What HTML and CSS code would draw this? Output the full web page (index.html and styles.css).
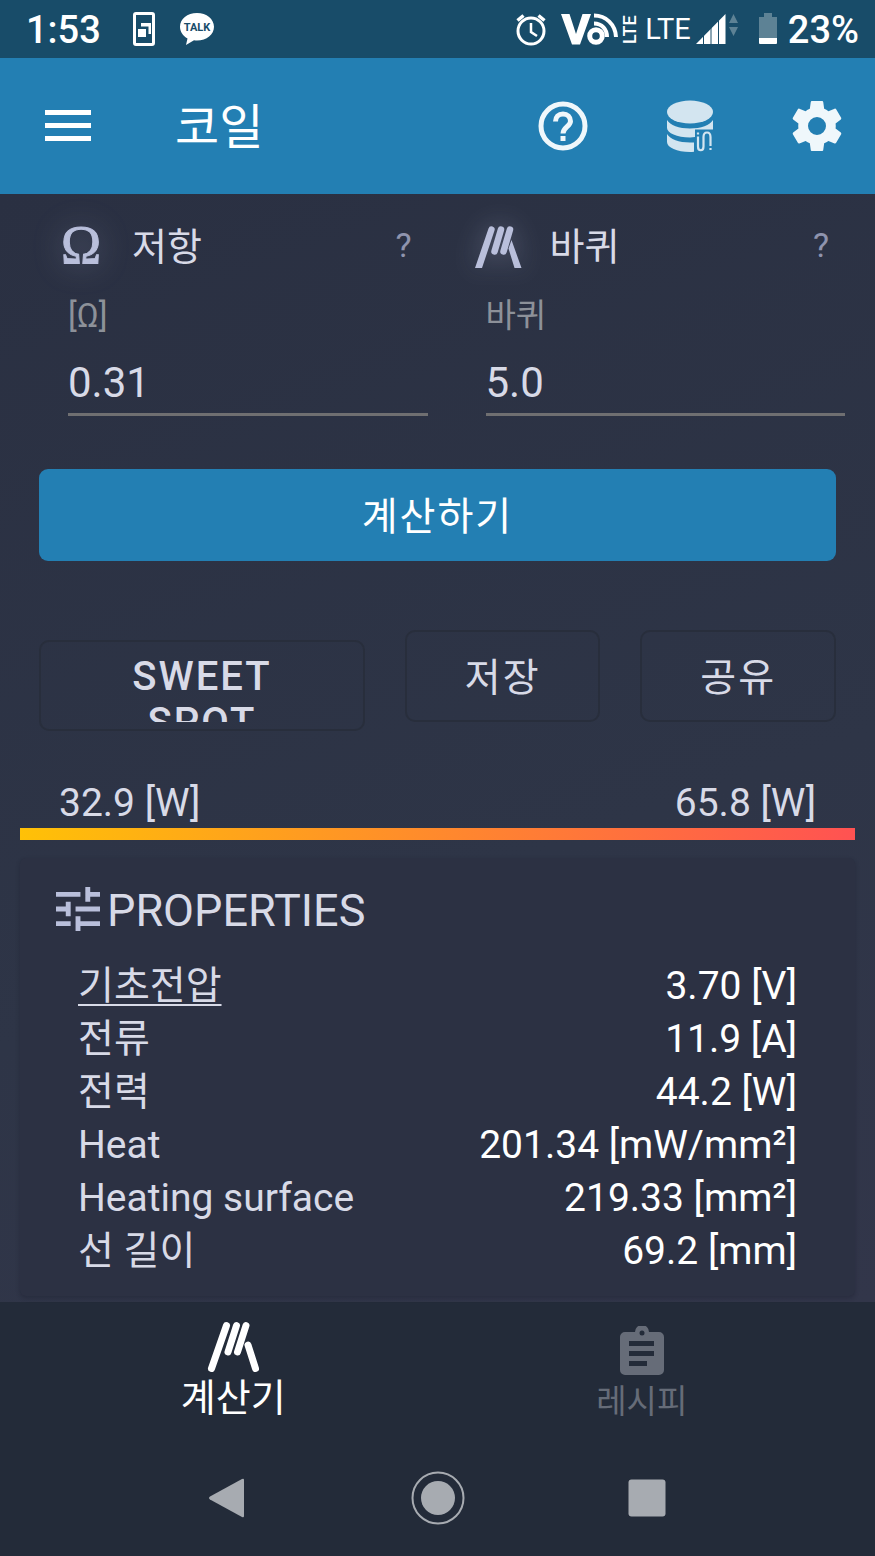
FILE: index.html
```html
<!DOCTYPE html>
<html lang="ko">
<head>
    <title>코일</title>
    <meta charset="utf-8">
    <meta name="viewport" content="width=device-width, initial-scale=1">
    <link rel="stylesheet" href="styles.css">
</head>
<body>
<div class="status">
    <span class="time">1:53</span>
    <svg class="st-phone" width="22" height="34" viewBox="0 0 22 34">
        <rect x="1.500" y="1.500" width="19" height="31" rx="1.500" fill="none" stroke="#fff" stroke-width="3"/>
        <path d="M5 17h8v8H5zM8 11h10v11h-2.500v-7.500H8z" fill="#fff"/>
    </svg>
    <svg class="st-talk" width="36" height="34" viewBox="0 0 36 34">
        <path d="M18 1C8.300 1 1 7 1 14.800c0 5 3 9.200 7.500 11.700L7 33l8-4.700c1 .2 2 .2 3 .2 9.700 0 17-6 17-13.700S27.700 1 18 1z" fill="#fff"/>
        <text x="18" y="19" text-anchor="middle" class="talk-text">TALK</text>
    </svg>
    <div class="status-right">
        <svg width="32" height="34" viewBox="0 0 32 34" fill="none" stroke="#fff">
            <circle cx="16" cy="19" r="13" stroke-width="3"/>
            <path d="M16 11v9l6 4" stroke-width="2.500"/>
            <path d="M2.500 8.500l6-5M29.500 8.500l-6-5" stroke-width="3.500"/>
        </svg>
        <svg class="st-volte" width="76" height="34" viewBox="0 0 76 34">
            <path d="M0 2h8.500l6.500 20 6.500-20H30L19 32.500h-8z" fill="#fff"/>
            <circle cx="35" cy="24" r="6.300" fill="none" stroke="#fff" stroke-width="5"/>
            <path d="M33 11.500c8 0 13 6 13 13.500M33 3.500c12 0 21.500 9 22 21.500" fill="none" stroke="#fff" stroke-width="4"/>
            <text transform="translate(75 32) rotate(-90)" class="volte-text">LTE</text>
        </svg>
        <span class="lte">LTE</span>
        <svg class="st-signal" width="44" height="34" viewBox="0 0 44 34">
            <path d="M1 32L30.500 2v30z" fill="#fff"/>
            <path d="M8.500 20v12M16 14v18M23.500 8v24" stroke="#184c69" stroke-width="1"/>
            <path d="M34 11l4.500-9 4.500 9zM34 15h9l-4.500 9z" fill="#5d8295"/>
        </svg>
        <svg class="st-battery" width="18" height="34" viewBox="0 0 18 34">
            <path d="M0 5h5V1h8v4h5v21H0z" fill="#5d8295"/>
            <path d="M0 26h18v5a1 1 0 0 1-1 1H1a1 1 0 0 1-1-1z" fill="#fff"/>
        </svg>
        <span class="percent">23%</span>
    </div>
</div>

<header class="appbar">
    <button class="icon-btn menu" aria-label="메뉴">
        <svg width="46" height="32" viewBox="0 0 46 32"><path d="M0 0h46v5H0zM0 13h46v5H0zM0 26h46v5H0z" fill="#fff"/></svg>
    </button>
    <h1>코일</h1>
    <button class="icon-btn" aria-label="도움말">
        <svg width="60" height="60" viewBox="0 0 60 60">
            <circle cx="30" cy="30" r="22" fill="none" stroke="#eff7fb" stroke-width="5"/>
            <path d="M22.500 25.500c0-4.500 3-7.600 7.500-7.600s7.500 3 7.500 7.300c0 5-7.500 6-7.500 12.300" fill="none" stroke="#eff7fb" stroke-width="5"/>
            <path d="M27.500 40h5v5h-5z" fill="#eff7fb"/>
        </svg>
    </button>
    <button class="icon-btn" aria-label="데이터베이스">
        <svg width="60" height="60" viewBox="0 0 60 60" fill="#d3e5f0">
            <ellipse cx="30" cy="16" rx="23" ry="11.500"/>
            <path d="M7 24c3 5 12 8.500 23 8.500S50 29 53 24v9.500H35V41c-1.500.3-3 .4-5 .4-13 0-23-4.400-23-9.400z"/>
            <path d="M7 38c3 5 12 8.500 23 8.500h4v9.300c-1.500.2-2.500.2-4 .2-13 0-23-4.400-23-10z"/>
            <path d="M38 40.500V50.500c0 5 5.500 5 5.500 0V41c0-6 7-6 7 0V50" fill="none" stroke="#d3e5f0" stroke-width="2.200"/>
            <path d="M36.900 36.500h2.200v2h-2.200zM49.400 52h2.200v2h-2.200z"/>
        </svg>
    </button>
    <button class="icon-btn" aria-label="설정">
        <svg width="60" height="60" viewBox="0 0 24 24">
            <path d="M19.430 12.980c.04-.32.07-.64.07-.98s-.03-.66-.07-.98l2.110-1.650c.19-.15.24-.42.12-.64l-2-3.460c-.12-.22-.39-.3-.61-.22l-2.490 1c-.52-.4-1.080-.73-1.690-.98l-.38-2.650C14.460 2.180 14.250 2 14 2h-4c-.25 0-.46.18-.49.42l-.38 2.650c-.61.25-1.170.59-1.690.98l-2.490-1c-.23-.09-.49 0-.61.22l-2 3.460c-.13.22-.07.49.12.64l2.110 1.650c-.04.32-.07.65-.07.98s.03.66.07.98l-2.110 1.650c-.19.15-.24.42-.12.64l2 3.460c.12.22.39.3.61.22l2.490-1c.52.4 1.080.73 1.690.98l.38 2.650c.03.24.24.42.49.42h4c.25 0 .46-.18.49-.42l.38-2.650c.61-.25 1.170-.59 1.690-.98l2.490 1c.23.09.49 0 .61-.22l2-3.460c.12-.22.07-.49-.12-.64l-2.110-1.650zM12 15.600a3.600 3.600 0 1 1 0-7.200 3.600 3.600 0 0 1 0 7.200z" fill="#eff7fb"/>
        </svg>
    </button>
</header>

<main>
    <div class="fields">
        <section class="field">
            <div class="field-head">
                <span class="field-icon omega">Ω</span>
                <h2>저항</h2>
                <button class="hint">?</button>
            </div>
            <label for="ohm">[Ω]</label>
            <input id="ohm" type="text" value="0.31">
        </section>
        <section class="field">
            <div class="field-head">
                <span class="field-icon">
                    <svg class="glow" width="50" height="50" viewBox="0 0 50 50">
                        <path d="M1 48L14.500 8.500a3 3 0 0 1 6 2L8 48zM40.500 48l-6-19.500 3-8.500L47.500 48z" fill="#b9bfdb"/>
                        <path d="M20.500 31.500l6.500-22M29.500 31.500l6.500-22" fill="none" stroke="#b9bfdb" stroke-width="6.500" stroke-linecap="round"/>
                    </svg>
                </span>
                <h2>바퀴</h2>
                <button class="hint">?</button>
            </div>
            <label for="wraps">바퀴</label>
            <input id="wraps" type="text" value="5.0">
        </section>
    </div>

    <button class="calc">계산하기</button>

    <div class="actions">
        <button class="btn sweet"><span>SWEET SPOT</span></button>
        <button class="btn">저장</button>
        <button class="btn">공유</button>
    </div>

    <div class="range">
        <span>32.9 [W]</span>
        <span>65.8 [W]</span>
    </div>
    <div class="range-bar"></div>

    <section class="card">
        <div class="card-head">
            <svg width="44" height="44" viewBox="3 3 18 18">
                <path d="M3 17v2h6v-2H3zM3 5v2h10V5H3zm10 16v-2h8v-2h-8v-2h-2v6h2zM7 9v2H3v2h4v2h2V9H7zm14 4v-2H11v2h10zm-6-4h2V7h4V5h-4V3h-2v6z" fill="#b9bfdb"/>
            </svg>
            <h2>PROPERTIES</h2>
        </div>
        <table>
            <tr><th scope="row"><a href="#voltage">기초전압</a></th><td>3.70 [V]</td></tr>
            <tr><th scope="row">전류</th><td>11.9 [A]</td></tr>
            <tr><th scope="row">전력</th><td>44.2 [W]</td></tr>
            <tr><th scope="row">Heat</th><td>201.34 [mW/mm²]</td></tr>
            <tr><th scope="row">Heating surface</th><td>219.33 [mm²]</td></tr>
            <tr><th scope="row">선 길이</th><td>69.2 [mm]</td></tr>
        </table>
    </section>
</main>

<nav class="tabs">
    <a href="#calc" class="tab active">
        <svg width="52" height="52" viewBox="0 0 52 52">
            <path d="M4.500 48.500L19.500 5.500M21 32L29.500 5.500M30.500 32L39 5.500M41 25l7.500 23.500" fill="none" stroke="#fff" stroke-width="7" stroke-linecap="round"/>
        </svg>
        <span>계산기</span>
    </a>
    <a href="#recipes" class="tab">
        <svg width="52" height="52" viewBox="0 0 52 52">
            <path d="M9 6h10a7 7 0 0 1 14 0h10a5 5 0 0 1 5 5v33a5 5 0 0 1-5 5H9a5 5 0 0 1-5-5V11a5 5 0 0 1 5-5z" fill="#666c78"/>
            <path d="M13 15h25v5H13zM13 25h25v5H13zM13 35h18v5H13z" fill="#232b39"/>
            <circle cx="26" cy="7" r="2.500" fill="#232b39"/>
        </svg>
        <span>레시피</span>
    </a>
</nav>

<div class="sysnav">
    <button aria-label="뒤로">
        <svg width="56" height="56" viewBox="0 0 56 56"><path d="M11 26.500L43 9q2-1 2 1v36q0 2-2 1L11 29.500q-2-1.500 0-3z" fill="#a7abb1"/></svg>
    </button>
    <button aria-label="홈">
        <svg width="56" height="56" viewBox="0 0 56 56"><circle cx="28" cy="28" r="25.500" fill="none" stroke="#a7abb1" stroke-width="2"/><circle cx="28" cy="28" r="17" fill="#a7abb1"/></svg>
    </button>
    <button aria-label="최근 앱">
        <svg width="56" height="56" viewBox="0 0 56 56"><rect x="7.500" y="9.500" width="37" height="37" rx="3" fill="#a7abb1"/></svg>
    </button>
</div>
</body>
</html>
```
FILE: styles.css
```css
* {
    margin: 0;
    padding: 0;
    box-sizing: border-box;
}

body {
    min-height: 100vh;
    display: flex;
    flex-direction: column;
    font-family: Roboto, "Noto Sans CJK KR", sans-serif;
    font-size: 39px;
    color: #d8dae7;
    background: #232b39;
}

button, input {
    font: inherit;
    color: inherit;
    border: 0;
    background: none;
}

h1, h2, th {
    font-weight: 400;
}

svg {
    display: block;
    flex: none;
}

/* status bar */
.status {
    height: 58px;
    padding: 0 16px 0 26px;
    display: flex;
    align-items: center;
    background: #184c69;
    color: #fff;
}

.time, .percent {
    font-size: 38px;
    font-weight: 500;
    line-height: 56px;
    padding-top: 2px;
}

.st-phone {
    margin-left: 32px;
}

.st-talk {
    margin-left: 24px;
}

.talk-text {
    font: 700 11px Roboto, sans-serif;
    fill: #184c69;
}

.status-right {
    margin-left: auto;
    display: flex;
    align-items: center;
}

.st-volte {
    margin-left: 14px;
    overflow: visible;
}

.volte-text {
    font: 500 18px Roboto, sans-serif;
    fill: #fff;
}

.lte {
    margin-left: 8px;
    font-size: 29px;
    line-height: 56px;
}

.st-signal {
    margin-left: 4px;
}

.st-battery {
    margin: 0 11px 0 20px;
}

/* app bar */
.appbar {
    height: 136px;
    padding: 0 28px 0 40px;
    display: flex;
    align-items: center;
    background: #237fb3;
    color: #fff;
}

.appbar h1 {
    flex: 1;
    margin-left: 84px;
    padding-top: 4px;
    font-size: 48px;
    line-height: 64px;
}

.icon-btn {
    margin-left: 67px;
}

.menu {
    margin-left: 5px;
}

/* content */
main {
    flex: 1;
    padding: 20px 20px 6px;
    background: linear-gradient(160deg, #2a3042, #2e3547 60%, #32364a);
}

.fields {
    display: grid;
    grid-template-columns: 1fr 1fr;
}

.field {
    padding: 0 10px 0 48px;
    display: flex;
    flex-direction: column;
}

.field-head {
    height: 62px;
    display: flex;
    align-items: center;
}

.field-head h2 {
    flex: 1;
    padding-top: 4px;
    font-size: 38px;
    line-height: 56px;
}

.field-icon {
    width: 50px;
    margin: 0 26px 0 -12px;
}

.omega {
    font: 400 54px/60px "Liberation Serif", serif;
    -webkit-text-stroke: 1px #b9bfdb;
    text-align: center;
    color: #b9bfdb;
    text-shadow: 0 0 30px rgba(185, 191, 219, 0.4);
}

.glow {
    filter: drop-shadow(0 0 14px rgba(185, 191, 219, 0.35));
}

.hint {
    width: 48px;
    font-size: 34px;
    color: #8f94ae;
}

.field label {
    margin-top: 16px;
    font-size: 33px;
    line-height: 48px;
    color: #8d9199;
}

.field input {
    width: 100%;
    height: 76px;
    padding-top: 12px;
    font-size: 42px;
    border-bottom: 3px solid #6f6f71;
    outline: none;
}

.calc {
    display: block;
    width: calc(100% - 38px);
    height: 92px;
    margin: 53px 19px 0;
    padding-bottom: 4px;
    border-radius: 9px;
    background: #237fb3;
    color: #fff;
    letter-spacing: 2px;
}

.actions {
    margin: 69px 19px 0;
    display: grid;
    grid-template-columns: 5fr 3fr 3fr;
    gap: 40px;
    align-items: start;
}

.btn {
    min-width: 0;
    height: 92px;
    padding-bottom: 4px;
    border: 2px solid #282e3c;
    border-radius: 10px;
    letter-spacing: 2px;
}

.sweet {
    height: 91px;
    margin-top: 10px;
    padding: 12px 64px 7px;
    font-size: 40px;
    font-weight: 500;
    line-height: 46px;
}

/* second line is cut off by the button height */
.sweet span {
    display: block;
    height: 68px;
    overflow: hidden;
}

.range {
    margin-top: 47px;
    padding: 0 39px;
    display: flex;
    justify-content: space-between;
    line-height: 50px;
}

.range-bar {
    height: 12px;
    background: linear-gradient(90deg, #ffc107, #ff5252);
}

.card {
    margin-top: 18px;
    padding: 26px 58px 18px;
    border-radius: 6px;
    background: #2c3143;
    box-shadow: 0 2px 4px rgba(20, 24, 36, 0.3);
}

.card-head {
    margin: 0 0 22px -22px;
    display: flex;
    align-items: center;
}

.card-head svg {
    margin-bottom: 4px;
}

.card-head h2 {
    margin-left: 7px;
    font-size: 45px;
    line-height: 54px;
}

table {
    width: 100%;
    border-collapse: collapse;
}

th, td {
    height: 53px;
    line-height: 53px;
    font-size: 39px;
}

th {
    text-align: left;
}

th a {
    color: inherit;
    text-decoration: underline;
    text-decoration-thickness: 2px;
    text-underline-offset: 5px;
}

td {
    text-align: right;
    color: #fff;
}

/* bottom tabs */
.tabs {
    height: 138px;
    padding: 18px 29px 0;
    display: flex;
}

.tab {
    flex: 1;
    display: flex;
    flex-direction: column;
    align-items: center;
    font-size: 33px;
    line-height: 48px;
    color: #666c78;
    text-decoration: none;
}

.tab svg {
    margin: 6px 0 0;
}

.tab.active {
    font-size: 38px;
    color: #fff;
}

.tab.active svg {
    margin: 0 0 2px;
}

.sysnav {
    height: 116px;
    padding: 0 121px;
    display: flex;
}

.sysnav button {
    flex: 1;
    display: flex;
    align-items: center;
    justify-content: center;
}
```
